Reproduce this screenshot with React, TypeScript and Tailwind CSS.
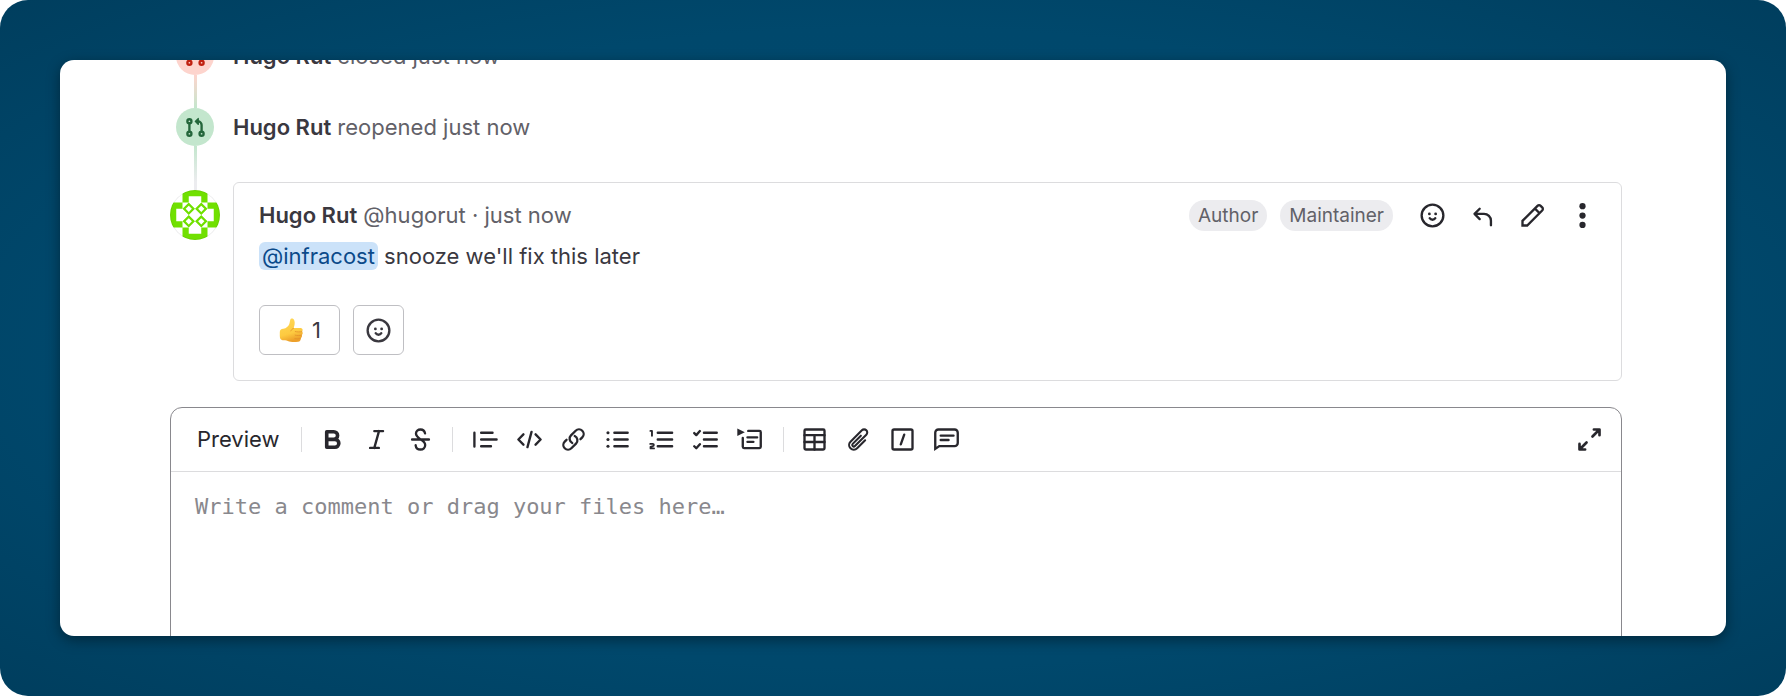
import type { ReactNode } from "react";

type IconProps = { children: ReactNode; box?: string; width?: number };

function Icon({ children, box = "0 0 16 16", width = 1.5 }: IconProps) {
  return (
    <svg
      className="size-[25px] shrink-0"
      viewBox={box}
      fill="none"
      stroke="currentColor"
      strokeWidth={width}
      strokeLinecap="round"
      strokeLinejoin="round"
      aria-hidden="true"
    >
      {children}
    </svg>
  );
}

const Smile = () => (
  <Icon>
    <circle cx="8" cy="8" r="6.95" />
    <g fill="currentColor" stroke="none">
      <circle cx="6" cy="7" r="0.9" />
      <circle cx="10" cy="7" r="0.9" />
    </g>
    <path d="M6.2 9.7a2.1 2.1 0 0 0 3.6 0" />
  </Icon>
);

const Reply = () => (
  <Icon>
    <path d="M6.2 3.7 2.9 7l3.3 3.3M3.2 7H9a4.4 4.4 0 0 1 4.4 4.4v2.8" />
  </Icon>
);

const Pencil = () => (
  <Icon>
    <path
      strokeLinejoin="miter"
      d="M1.6 14.4v-3L11.2 1.8a1.4 1.4 0 0 1 2 0l1 1a1.4 1.4 0 0 1 0 2L4.6 14.4zM9.6 3.6l2.8 2.8"
    />
  </Icon>
);

const Dots = () => (
  <Icon>
    <g fill="currentColor" stroke="none">
      <circle cx="8" cy="2" r="2" />
      <circle cx="8" cy="8" r="2" />
      <circle cx="8" cy="14" r="2" />
    </g>
  </Icon>
);

const MergeRequest = ({ closed = false }: { closed?: boolean }) => (
  <Icon>
    <circle cx="4.1" cy="4" r="1.3" />
    <circle cx="4.1" cy="12" r="1.3" />
    <circle cx="11.9" cy="12" r="1.3" />
    <path d="M4.1 5.5v5" />
    {closed ? (
      <path d="M11.9 10.5V7.5M10.2 2.5l3.4 3.4m0-3.4-3.4 3.4" />
    ) : (
      <>
        <path d="M11.9 10.5V6.4A2.3 2.3 0 0 0 9.6 4.1H9" />
        <path d="M9.8 2.2v3.9L7.8 4.1z" fill="currentColor" strokeWidth="0.7" />
      </>
    )}
  </Icon>
);

const inlineTools: { label: string; icon: ReactNode }[] = [
  {
    label: "Bold",
    icon: (
      <Icon width={2.3}>
        <path d="M4.3 3h4.5a2.45 2.45 0 0 1 0 4.9H4.3zM4.3 7.9h5.2a2.55 2.55 0 0 1 0 5.1H4.3z" />
      </Icon>
    ),
  },
  {
    label: "Italic",
    icon: (
      <Icon>
        <path d="M6.6 2.6h5.6M3.9 13.4h5.6M9.6 2.6l-3 10.8" />
      </Icon>
    ),
  },
  {
    label: "Strikethrough",
    icon: (
      <Icon>
        <path d="M2.6 8h10.8M10.9 4.1C10.6 2.4 9.4 1.6 8 1.6c-1.6 0-2.9 1-2.9 2.6 0 1.5 1 2.4 2.9 3.8 1.9 1 3 1.9 3 3.5 0 1.8-1.3 2.9-3 2.9s-2.9-.9-3.1-2.7" />
      </Icon>
    ),
  },
];

const blockTools: { label: string; icon: ReactNode }[] = [
  {
    label: "Quote",
    icon: (
      <Icon>
        <path d="M.9 3.6v8.9M5.2 3.7h7.3M5.2 8h9.9M5.2 12.3h6.3" />
      </Icon>
    ),
  },
  {
    label: "Code",
    icon: (
      <Icon>
        <path d="M4.1 4.7.9 8l3.2 3.3M11.9 4.7 15.1 8l-3.2 3.3M9.3 3.1 6.7 12.9" />
      </Icon>
    ),
  },
  {
    label: "Link",
    icon: (
      <Icon box="0 0 24 24" width={2.2}>
        <path d="M13.19 8.688a4.5 4.5 0 0 1 1.242 7.244l-4.5 4.5a4.5 4.5 0 0 1-6.364-6.364l1.757-1.757m13.35-.622 1.757-1.757a4.5 4.5 0 0 0-6.364-6.364l-4.5 4.5a4.5 4.5 0 0 0 1.242 7.244" />
      </Icon>
    ),
  },
  {
    label: "Bullet list",
    icon: (
      <Icon>
        <path d="M6 3.7h8.5M6 8h8.5M6 12.3h8.5" />
        <g fill="currentColor" stroke="none">
          <circle cx="1.9" cy="3.7" r="1" />
          <circle cx="1.9" cy="8" r="1" />
          <circle cx="1.9" cy="12.3" r="1" />
        </g>
      </Icon>
    ),
  },
  {
    label: "Numbered list",
    icon: (
      <Icon>
        <path d="M5.6 3.7h9.2M5.6 8h9.2M5.6 12.3h9.2" />
        <path
          strokeWidth="1.2"
          d="M.9 2.5h1v3.1M.8 10.8h1.6c.9 0 .9 1.2.1 1.4l-1.5.5v1h2.2"
        />
      </Icon>
    ),
  },
  {
    label: "Task list",
    icon: (
      <Icon>
        <path d="M7 3.7h8.2M7 8h8.2M7 12.3h8.2M.8 3.9l1.3 1.3 2.3-2.6M.8 12.3l1.3 1.3L4.4 11" />
      </Icon>
    ),
  },
  {
    label: "Collapsible section",
    icon: (
      <Icon>
        <path d="M7.2 2.5h7.2a.8.8 0 0 1 .8.8v9.4a.8.8 0 0 1-.8.8H4.5a.8.8 0 0 1-.8-.8V7M6.7 6.6h6.2M6.7 9.5h3.8" />
        <path d="M.2.9v4.9L5 3.3z" fill="currentColor" stroke="none" />
      </Icon>
    ),
  },
];

const insertTools: { label: string; icon: ReactNode }[] = [
  {
    label: "Table",
    icon: (
      <Icon>
        <rect x="1.6" y="1.6" width="12.8" height="12.8" rx=".8" />
        <path d="M1.6 5.2h12.8M1.6 9.6h12.8M8 5.2v9.2" />
      </Icon>
    ),
  },
  {
    label: "Attach a file",
    icon: (
      <Icon box="0 0 24 24" width={2}>
        <path d="m18.375 12.739-7.693 7.693a4.5 4.5 0 0 1-6.364-6.364l10.94-10.94A3 3 0 1 1 19.5 7.372L8.552 18.32a1.5 1.5 0 0 1-2.112-2.13l7.81-7.81" />
      </Icon>
    ),
  },
  {
    label: "Quick action",
    icon: (
      <Icon>
        <rect x="1.6" y="1.6" width="12.8" height="12.8" rx="1" />
        <path d="M9.1 4.9 6.9 11.1" />
      </Icon>
    ),
  },
  {
    label: "Comment template",
    icon: (
      <Icon>
        <path
          strokeLinejoin="miter"
          d="M.8 14V3.6a2 2 0 0 1 2-2h10.4a2 2 0 0 1 2 2v6.6a2 2 0 0 1-2 2H3.4z"
        />
        <path d="M4.3 5.5h8.2M4.3 8.3h5" />
      </Icon>
    ),
  },
];

const Expand = () => (
  <Icon width={1.7}>
    <path d="M10.8 1.6h3.6v3.6M14.2 1.8 9.9 6.1M5.2 14.4H1.6v-3.6M1.8 14.2l4.3-4.3" />
  </Icon>
);

const ThumbsUp = () => (
  <svg className="size-[25px] shrink-0" viewBox="0 0 25 25" aria-hidden="true">
    <defs>
      <linearGradient id="thumb" x1="0" y1="0" x2="0.3" y2="1">
        <stop offset="0" stopColor="#ffd95a" />
        <stop offset="0.7" stopColor="#fdca40" />
        <stop offset="1" stopColor="#eda02a" />
      </linearGradient>
    </defs>
    <path
      fill="url(#thumb)"
      d="M.8 14.2c0-2.5 1.2-3.3 3.5-3.5 3-.4 5-2.3 6-4.7.5-1.3.5-2.9.9-4 .6-1.900 3.200-1.900 4.100.4.900 2.300.2 5.200-.7 7.700h6.700c2.300 0 3 2.300 1.600 3.500 1.200.9 1.100 2.700-.2 3.500.7 1.100.2 2.600-1 3.100.4 1.600-.7 3.300-2.600 3.600-3.500.5-7.600.5-10.300-.8-1.800-.8-3.300-.6-5.200-.8C1.800 21.900.8 20.400.8 18z"
    />
    <path
      fill="none"
      stroke="#e2912a"
      strokeWidth="0.8"
      strokeLinecap="round"
      d="M16.3 13.6c2 .5 4.500.4 6.600.1M16.200 17.200c2 .5 4.300.4 6.400 0M15.900 20.600c1.800.4 3.700.4 5.500-.1M14.600 10.200c-1.300.5-2.200 1.500-2.700 2.700"
    />
  </svg>
);

const Avatar = () => (
  <svg className="size-[50px] shrink-0" viewBox="0 0 48 48" role="img" aria-label="Hugo Rut">
    <defs>
      <clipPath id="avatar">
        <circle cx="24" cy="24" r="24" />
      </clipPath>
    </defs>
    <g clipPath="url(#avatar)">
      <rect width="48" height="48" fill="#fff" />
      <g fill="#70e000">
        <path d="M12 0h24v12h-6V6H18v6h-6zM12 48h24V36h-6v6H18v-6h-6zM0 12v24h12v-6H6V18h6v-6zM48 12v24H36v-6h6V18h-6v-6z" />
        <path
          fillRule="evenodd"
          d="M18 12l6 6-6 6-6-6zM18 15l3 3-3 3-3-3zM30 12l6 6-6 6-6-6zM30 15l3 3-3 3-3-3zM18 24l6 6-6 6-6-6zM18 27l3 3-3 3-3-3zM30 24l6 6-6 6-6-6zM30 27l3 3-3 3-3-3z"
        />
      </g>
      <circle cx="24" cy="24" r="23.5" fill="none" stroke="#1f1e24" strokeOpacity="0.08" />
    </g>
  </svg>
);

function Tool({ label, children }: { label: string; children: ReactNode }) {
  return (
    <button
      type="button"
      aria-label={label}
      className="flex size-[38px] shrink-0 items-center justify-center rounded-md text-[#28272d]"
    >
      {children}
    </button>
  );
}

const Divider = () => <span className="mx-1.5 h-[25px] w-px shrink-0 bg-[#dcdcde]" />;

const Role = ({ children }: { children: ReactNode }) => (
  <span className="rounded-full bg-[#ececef] px-[9px] text-[19px] leading-[31px] text-[#626168]">
    {children}
  </span>
);

export default function App() {
  return (
    <div className="flex h-screen flex-col rounded-[28px] bg-[radial-gradient(ellipse_at_center,#004a70_0%,#00486c_65%,#003e5e_100%)] p-[60px] font-['Inter',sans-serif] text-[22px] text-[#3a383f]">
      <main className="min-h-0 flex-1 overflow-hidden rounded-[14px] bg-white pr-[104px] pl-[110px] shadow-[0_4px_14px_rgba(0,0,0,0.4)]">
        <ul className="-mt-[23px]">
          <li className="flex h-[71px] gap-[13px]">
            <div className="flex w-[50px] flex-col items-center">
              <span className="flex size-[38px] shrink-0 items-center justify-center rounded-full bg-[#fdd4cd] text-[#c02010]">
                <MergeRequest closed />
              </span>
              <span className="w-[3px] flex-1 bg-linear-to-b from-[#fdd4cd] to-[#c3e6cd]" />
            </div>
            <p className="leading-[38px] text-[#626168]">
              <a href="#hugorut" className="font-semibold text-[#3a383f]">Hugo Rut</a> closed just now
            </p>
          </li>
          <li className="flex h-[74px] gap-[13px]">
            <div className="flex w-[50px] flex-col items-center">
              <span className="flex size-[38px] shrink-0 items-center justify-center rounded-full bg-[#c3e6cd] text-[#24663b]">
                <MergeRequest />
              </span>
              <span className="w-[3px] flex-1 bg-linear-to-b from-[#c3e6cd] to-[#ececef]" />
            </div>
            <p className="leading-[38px] text-[#626168]">
              <a href="#hugorut" className="font-semibold text-[#3a383f]">Hugo Rut</a> reopened just now
            </p>
          </li>
          <li className="flex gap-[13px]">
            <div className="flex w-[50px] flex-col items-center">
              <span className="h-2 w-[3px] bg-[#ececef]" />
              <Avatar />
            </div>
            <article className="flex-1 rounded-md border border-[#dcdcde] pt-4 pr-5 pb-[25px] pl-[25px]">
              <header className="flex h-8 items-center">
                <p className="flex-1 text-[#626168]">
                  <a href="#hugorut" className="font-semibold text-[#3a383f]">Hugo Rut</a> @hugorut · just now
                </p>
                <div className="mr-5 flex gap-[13px]">
                  <Role>Author</Role>
                  <Role>Maintainer</Role>
                </div>
                <div className="flex gap-3">
                  <Tool label="Add reaction"><Smile /></Tool>
                  <Tool label="Reply to comment"><Reply /></Tool>
                  <Tool label="Edit comment"><Pencil /></Tool>
                  <Tool label="More actions"><Dots /></Tool>
                </div>
              </header>
              <p className="mt-2 leading-[34px]">
                <a href="#infracost" className="rounded-md bg-[#cbe2f9] px-[3px] py-px text-[#0b4a8a]">@infracost</a>{" "}
                snooze we'll fix this later
              </p>
              <div className="mt-8 flex gap-[13px]">
                <button
                  type="button"
                  aria-label="Thumbs up, 1 reaction"
                  className="flex h-[50px] items-center gap-2 rounded-md border border-[#bfbfc3] pr-[18px] pl-[19px]"
                >
                  <ThumbsUp />
                  <span>1</span>
                </button>
                <button
                  type="button"
                  aria-label="Add reaction"
                  className="flex h-[50px] w-[51px] items-center justify-center rounded-md border border-[#bfbfc3]"
                >
                  <Smile />
                </button>
              </div>
            </article>
          </li>
        </ul>
        <section className="mt-[26px] rounded-xl border border-[#89888d]">
          <div className="flex h-16 items-center gap-1.5 border-b border-[#dcdcde] pr-[13px] pl-[17px]">
            <button type="button" className="px-[9px] text-[#28272d]">Preview</button>
            <Divider />
            {inlineTools.map((t) => <Tool key={t.label} label={t.label}>{t.icon}</Tool>)}
            <Divider />
            <div className="flex gap-1.5 px-0.5">
              {blockTools.map((t) => <Tool key={t.label} label={t.label}>{t.icon}</Tool>)}
            </div>
            <Divider />
            {insertTools.map((t) => <Tool key={t.label} label={t.label}>{t.icon}</Tool>)}
            <div className="flex-1" />
            <Tool label="Go full screen"><Expand /></Tool>
          </div>
          <textarea
            aria-label="Comment"
            placeholder="Write a comment or drag your files here…"
            className="block h-[220px] w-full resize-none bg-transparent px-6 py-[18px] font-['DejaVu_Sans_Mono',monospace] leading-[34px] outline-none placeholder:text-[#89888d]"
          />
        </section>
      </main>
    </div>
  );
}
